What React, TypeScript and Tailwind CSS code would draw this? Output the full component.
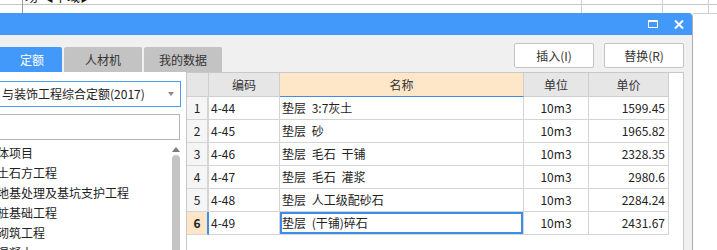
import React from "react";

const font = { fontFamily: '"Noto Sans CJK SC", "Noto Sans", sans-serif' };

const rows = [
  { n: 1, code: "4-44", name: "垫层 3:7灰土", unit: "10m3", price: "1599.45" },
  { n: 2, code: "4-45", name: "垫层 砂", unit: "10m3", price: "1965.82" },
  { n: 3, code: "4-46", name: "垫层 毛石 干铺", unit: "10m3", price: "2328.35" },
  { n: 4, code: "4-47", name: "垫层 毛石 灌浆", unit: "10m3", price: "2980.6" },
  { n: 5, code: "4-48", name: "垫层 人工级配砂石", unit: "10m3", price: "2284.24" },
  { n: 6, code: "4-49", name: "垫层 (干铺)碎石", unit: "10m3", price: "2431.67" },
];

const tree = ["体项目", "土石方工程", "地基处理及基坑支护工程", "桩基础工程", "砌筑工程", "混凝土"];

const App = () => {
  return (
    <div className="w-[717px] h-[250px] overflow-hidden bg-white text-[12px] text-[#222]" style={font}>
      {/* background sheet strip */}
      <div className="relative h-[13px] overflow-hidden">
        <div className="absolute left-0 right-0 top-[4px] h-px bg-[#c6c6c6]" />
        <div className="absolute left-[22px] top-0 h-[13px] w-px bg-[#9a9a9a]" />
        <div className="absolute left-[581px] top-0 h-[13px] w-px bg-[#d0d0d0]" />
        <div className="absolute left-[662px] top-0 h-[13px] w-px bg-[#d0d0d0]" />
        <div className="absolute left-[708px] top-0 h-[13px] w-px bg-[#d0d0d0]" />
        <div className="absolute left-[25px] top-[-12px] leading-[16px] text-[13px] text-[#111]">场 ◀中域▶</div>
      </div>

      <div className="flex">
        {/* dialog window */}
        <div className="w-[693px] h-[237px] flex flex-col border-r border-[#adadad] rounded-tr-[4px] overflow-hidden">
          <div className="h-[22px] shrink-0 bg-[#4399fa] flex items-center justify-end pr-[8px] gap-[16px]">
            <svg width="10" height="8" viewBox="0 0 10 8">
              <rect x="0.5" y="1" width="9" height="6.5" fill="none" stroke="#fff" strokeWidth="1" />
              <rect x="0" y="0" width="10" height="2" fill="#fff" />
            </svg>
            <svg width="10" height="9" viewBox="0 0 10 9">
              <path d="M1 0.5 L9 8.5 M9 0.5 L1 8.5" stroke="#fff" strokeWidth="2" />
            </svg>
          </div>

          <div className="flex-1 min-h-0 bg-[#f0f0f0] flex flex-col">
            {/* toolbar: tabs + buttons */}
            <div className="h-[37px] shrink-0 flex items-start pr-[8px]">
              <div className="self-end flex gap-[2px]">
                <div className="w-[62px] h-[25px] bg-[#4399fa] text-white flex items-center justify-center pl-[2px] rounded-tr-[2px]">
                  定额
                </div>
                <div className="w-[78px] h-[25px] bg-[#c3c3c3] text-[#333] flex items-center justify-center rounded-t-[2px]">
                  人材机
                </div>
                <div className="w-[78px] h-[25px] bg-[#c3c3c3] text-[#333] flex items-center justify-center rounded-t-[2px]">
                  我的数据
                </div>
              </div>
              <div className="ml-auto mt-[8px] flex gap-[10px]">
                <button className="w-[80px] h-[25px] bg-white border border-[#c4c4c4] rounded-[2px] text-[#333]">插入(I)</button>
                <button className="w-[80px] h-[25px] bg-white border border-[#c4c4c4] rounded-[2px] text-[#333]">替换(R)</button>
              </div>
            </div>

            {/* main panel */}
            <div className="flex-1 min-h-0 overflow-hidden flex bg-white mr-[8px]">
              {/* left panel */}
              <div className="w-[186px] shrink-0 pt-[9px] flex flex-col">
                <div className="w-[181px] h-[26px] shrink-0 border border-l-0 border-[#4c9cf0] flex items-center pl-[2px] pr-[6px]">
                  <span className="whitespace-nowrap">与装饰工程综合定额(2017)</span>
                  <span className="ml-auto w-0 h-0 border-l-[3px] border-r-[3px] border-t-[4px] border-l-transparent border-r-transparent border-t-[#888]" />
                </div>
                <div className="mt-[7px] w-[180px] h-[26px] shrink-0 border border-l-0 border-[#b4b4b4]" />
                <div className="mt-[3px] w-[181px] flex flex-1 min-h-0">
                  <div className="flex-1 overflow-hidden">
                    {tree.map((t) => (
                      <div key={t} className="h-[20px] leading-[20px] whitespace-nowrap ml-[-3px] text-[#222]">
                        {t}
                      </div>
                    ))}
                  </div>
                  <div className="w-[9px] mr-[1px] flex flex-col items-center">
                    <div className="h-[12px] shrink-0 flex items-center">
                      <span className="w-0 h-0 border-l-[4px] border-r-[4px] border-b-[5px] border-l-transparent border-r-transparent border-b-[#7a7a7a]" />
                    </div>
                    <div className="w-[8px] flex-1 rounded-t-[4px] bg-[#c4c4c4]" />
                  </div>
                </div>
              </div>

              {/* table */}
              <div className="flex-1 border-l border-t border-r border-[#c8c8c8]">
                <div className="grid grid-cols-[22px_71px_244px_65px_80px] w-[482px]">
                  <div className="h-[24px] bg-[#e6e6e6] border-r border-b border-[#cfcfcf]" />
                  <div className="h-[24px] bg-[#e6e6e6] border-r border-b border-[#cfcfcf] flex items-center justify-center text-[#333]">编码</div>
                  <div className="h-[24px] bg-[#fee7c9] border-r border-b border-r-[#cfcfcf] border-b-[#3d8de6] flex items-center justify-center text-[#333]">名称</div>
                  <div className="h-[24px] bg-[#e6e6e6] border-r border-b border-[#cfcfcf] flex items-center justify-center text-[#333]">单位</div>
                  <div className="h-[24px] bg-[#e6e6e6] border-r border-b border-[#cfcfcf] flex items-center justify-center text-[#333]">单价</div>

                  {rows.map((r) => {
                    const sel = r.n === 6;
                    return (
                      <React.Fragment key={r.n}>
                        <div
                          className={`h-[23px] border-b border-r-2 border-b-[#d4d4d4] flex items-center justify-center ${
                            sel ? "bg-[#fde6c8] font-bold border-r-[#3d8de6]" : "bg-[#f5f5f5] border-r-[#d4d4d4]"
                          }`}
                        >
                          {r.n}
                        </div>
                        <div className="h-[23px] border-r border-b border-[#d4d4d4] flex items-center pl-[2px]">{r.code}</div>
                        <div
                          className={`h-[23px] border-r border-b border-[#d4d4d4] flex items-center pl-[2px] whitespace-nowrap [word-spacing:3px] ${
                            sel ? "shadow-[inset_0_0_0_2px_#3d8de6]" : ""
                          }`}
                        >
                          {r.name}
                        </div>
                        <div className="h-[23px] border-r border-b border-[#d4d4d4] flex items-center justify-center">{r.unit}</div>
                        <div className="h-[23px] border-r border-b border-[#d4d4d4] flex items-center justify-end pr-[3px]">{r.price}</div>
                      </React.Fragment>
                    );
                  })}
                </div>
              </div>
            </div>
          </div>
        </div>

        {/* right strip of sheet behind */}
        <div className="flex-1 h-[237px] border-t border-[#d0d0d0] bg-white" />
      </div>
    </div>
  );
};

export default App;
